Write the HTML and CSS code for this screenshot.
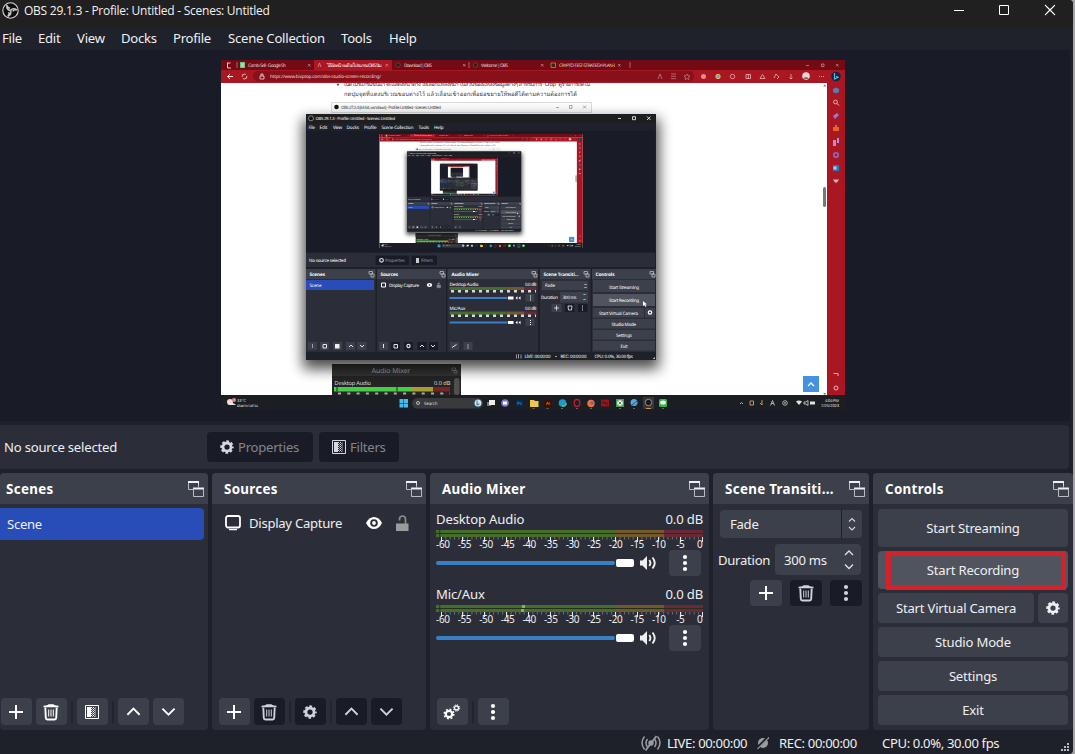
FILE: index.html
```html
<!DOCTYPE html>
<html lang="en">
<head>
<meta charset="utf-8">
<title>OBS 29.1.3</title>
<link rel="stylesheet" href="styles.css">
</head>
<body>
<svg class="defs" width="0" height="0">
  <symbol id="plus" viewBox="0 0 14 14"><path d="M7 0v14M0 7h14" stroke="currentColor" stroke-width="2" fill="none"/></symbol>
  <symbol id="trash" viewBox="0 0 16 18"><path d="M.5 2.700Q5 2.400 5.500 1.300h5Q11 2.400 15.500 2.700v1.500H.5z" fill="currentColor"/><path d="M2.300 4.500l.5 10.500q.1 1.500 1.500 1.500h7.400q1.400 0 1.500-1.500l.5-10.500" fill="none" stroke="currentColor" stroke-width="1.900"/><path d="M5.700 6.500v7M8 6.500v7M10.300 6.500v7" stroke="currentColor" stroke-width="1"/></symbol>
  <symbol id="filter" viewBox="0 0 14 14"><path d="M.5.5h13v13H.5z" fill="none" stroke="currentColor"/><path d="M2 2h4v10H2z" fill="currentColor"/><path d="M6.500 2v10M8.500 2v10" stroke="currentColor" stroke-dasharray="1 1"/><path d="M7.500 3v9M9.500 3v9" stroke="currentColor" stroke-dasharray="1 1" opacity=".7"/><path d="M10.500 2v10" stroke="currentColor" opacity=".35"/></symbol>
  <symbol id="up" viewBox="0 0 16 16"><path d="M1.500 11.500L8 5l6.500 6.500" fill="none" stroke="currentColor" stroke-width="2"/></symbol>
  <symbol id="down" viewBox="0 0 16 16"><path d="M1.500 5L8 11.500 14.500 5" fill="none" stroke="currentColor" stroke-width="2"/></symbol>
  <symbol id="gear" viewBox="0 0 16 16"><circle cx="8" cy="8" r="4.600" fill="none" stroke="currentColor" stroke-width="3.200"/><circle cx="8" cy="8" r="6.500" fill="none" stroke="currentColor" stroke-width="2.400" stroke-dasharray="3 2.105" stroke-dashoffset="1.500"/></symbol>
  <symbol id="dots" viewBox="0 0 16 18"><g fill="currentColor"><circle cx="8" cy="3" r="2.100"/><circle cx="8" cy="9" r="2.100"/><circle cx="8" cy="15" r="2.100"/></g></symbol>
  <symbol id="pop" viewBox="0 0 16 16"><path d="M10.500 4V.800M.500 1v7.500H5" fill="none" stroke="currentColor" opacity=".7"/><path d="M0 0h11v2H0zM5 6.500h11v2H5z" fill="currentColor"/><path d="M10.500 2v4.500M5.500 8.500v7h10v-7" fill="none" stroke="currentColor" opacity=".7"/></symbol>
  <symbol id="speaker" viewBox="0 0 17 14"><path d="M0 4.500h2.500L7 0v14L2.500 9.500H0z" fill="currentColor"/><path d="M9.300 4q2.200 3 0 6M12.500 1.500q4.500 5.500 0 11" fill="none" stroke="currentColor" stroke-width="1.900"/></symbol>
  <symbol id="obs" viewBox="0 0 17 17"><circle cx="8.500" cy="8.500" r="7.700" fill="#0d0d0f" stroke="#d8d8d8" stroke-width="1.100"/><g fill="none" stroke="#c8c8c8" stroke-width="1.500"><path d="M8.500 8.500Q4.500 8 4.800 3.200Q5.500 5.800 8 6.300"/><path d="M8.500 8.500Q4.500 8 4.800 3.200Q5.500 5.800 8 6.300" transform="rotate(120 8.500 8.500)"/><path d="M8.500 8.500Q4.500 8 4.800 3.200Q5.500 5.800 8 6.300" transform="rotate(240 8.500 8.500)"/></g></symbol>
  <symbol id="meter" viewBox="0 0 268 12">
    <path d="M0 0h180v7H0z" fill="#466d2c"/><path d="M180 0h48v7h-48z" fill="#71592d"/><path d="M228 0h39v7h-39z" fill="#692a38"/>
    <path d="M0 3.500h267M3.800 0v7" stroke="#24301f" stroke-width="1"/>
    <path d="M5 8.200h262" stroke="#74777f" stroke-width="2.400" stroke-dasharray=".9 3.457"/>
    <path d="M5.500 7v5M26.500 7v5M48.500 7v5M70.500 7v5M92.500 7v5M114.500 7v5M136.500 7v5M157.500 7v5M179.500 7v5M201.500 7v5M222.500 7v5M244.500 7v5M266.500 7v5" stroke="#e4e5e8"/>
  </symbol>
</svg>

<div class="window">
  <header class="titlebar">
    <svg class="logo"><use href="#obs"/></svg>
    <span class="title">OBS 29.1.3 - Profile: Untitled - Scenes: Untitled</span>
    <svg class="winbtns" viewBox="0 0 102 12"><path d="M0 6.500h10" stroke="#fff"/><path d="M45.500 1.500h9v9h-9z" fill="none" stroke="#fff"/><path d="M91 1l10 10M101 1L91 11" stroke="#fff" stroke-width="1.100"/></svg>
  </header>
  <nav class="menubar">
    <span class="m1">File</span><span class="m2">Edit</span><span class="m3">View</span><span class="m4">Docks</span><span class="m5">Profile</span><span class="m6">Scene Collection</span><span class="m7">Tools</span><span>Help</span>
  </nav>

  <main class="preview">
    <svg class="capture" viewBox="221 60 624 350">
      <defs>
        <filter id="shadow" x="-20%" y="-20%" width="140%" height="140%"><feGaussianBlur stdDeviation="7"/></filter>
        <g id="desk">
          <path d="M221 60h624v350H221z" fill="#fff"/>
          <path d="M221 60h624v10H221z" fill="#740a14"/>
          <path d="M314 60h78v11h-78z" fill="#ab1723"/>
          <path d="M221 70h624v13H221zM827 82h18v313h-18z" fill="#a81722"/>
          <rect x="253" y="71" width="441" height="10.500" rx="5" fill="#87101a"/>
          <g font-size="4.700" fill="#efd4d6">
            <text x="248" y="67" textLength="38">Comb-Sell - Google Sh</text>
            <text x="326" y="67" textLength="55" fill="#fff">วิธีอัดหน้าจอด้วยโปรแกรม OBS Stu</text>
            <text x="404" y="67" textLength="28">Download | OBS</text>
            <text x="481" y="67" textLength="27">Welcome | OBS</text>
            <text x="559" y="67" textLength="56">CRYPTO-TEST-STRATEGY-PLAN-I</text>
            <text x="270" y="78.300" textLength="111" fill="#f1d5d7">https://www.bixptop.com/obs-studio-screen-recording/</text>
          </g>
          <path d="M227 63h3.500M227.500 63v5h3.500" stroke="#efc7ca" fill="none"/><path d="M237 62v6M469 62v6M630 62v6" stroke="#c98a90" stroke-width=".7"/>
          <path d="M240 62h5v6h-5z" fill="#6fc07a"/><path d="M241 64h3M241 66h3" stroke="#fff" stroke-width=".8"/>
          <path d="M318 67l1.500-4 1.500 4" stroke="#d8a0a0" stroke-width=".7" fill="none"/><circle cx="398" cy="65" r="2.300" fill="#33181c" stroke="#7c4a4e" stroke-width=".7"/><circle cx="475.500" cy="65" r="2.300" fill="#33181c" stroke="#7c4a4e" stroke-width=".7"/><path d="M551 63h4.500v4.500H551z" fill="#3a2510" stroke="#c78c35" stroke-width=".8"/>
          <path d="M308 64l2.500 2.500m0-2.500L308 66.500M385.500 64l2.500 2.500m0-2.500l-2.500 2.500M463 64l2.500 2.500m0-2.500l-2.500 2.500M541 64l2.500 2.500m0-2.500l-2.500 2.500M618 64l2.500 2.500m0-2.500l-2.500 2.500M806 65.500h3M821.500 64h2.500v2.500h-2.500zM836 64l2.500 2.500m0-2.500l-2.500 2.500" stroke="#dfaeb2" stroke-width=".6" fill="none"/>
          <path d="M233 76.500h-5.500m2.500-2.300l-2.500 2.300 2.500 2.300" stroke="#fff" fill="none" stroke-width=".9"/>
          <circle cx="244.500" cy="76.500" r="2.400" fill="none" stroke="#f0c8ca" stroke-width=".9" stroke-dasharray="5 1.500"/><path d="M260 76h4v3h-4zM261 76v-2h2v2" stroke="#f4d5d8" fill="none" stroke-width=".8"/>
          <g fill="none" stroke="#cf858b" stroke-width=".7"><path d="M658 79l2-5 2 5M671 74h5m-5 2.300h5m-5 2.400h5"/><path d="M687 74l1 1.800 2 .2-1.500 1.500.4 2-1.900-1-1.900 1 .4-2-1.500-1.500 2-.2z"/><g stroke="#f4c3c6"><circle cx="732.500" cy="76.500" r="2.200"/><path d="M746 74.500h4.500v4H746zM748.300 74v5M760 78.500l2.500-4 2.500 4zM774 78l2-4 3 3-2 2M791 74v5m-1.500-1.500L791 79l1.500-1.500M819 76.500h1m1 0h1m1 0h1"/></g></g>
          <circle cx="703.500" cy="76.500" r="2.500" fill="#ee8790"/><circle cx="718" cy="76.500" r="2.200" fill="#6ba2e2" stroke="#e3bd55"/><circle cx="806" cy="76" r="3.800" fill="#edd5d0"/><path d="M803 79q3-4 6 0" fill="#876761"/>
          <circle cx="836" cy="76.500" r="4.800" fill="#162541"/><path d="M834.500 73v6l3.500-1.800-2-1" stroke="#61b8e7" fill="none" stroke-width="1.200"/>
          <path d="M836 87.500l3 1.500v3l-3 1.500-3-1.500v-3z" fill="#567cb8"/><circle cx="835.500" cy="102" r="1.900" fill="none" stroke="#e9cbd0" stroke-width=".8"/><path d="M837 103.500l2 2" stroke="#e9cbd0"/>
          <path d="M833 116l4-3 2 2-4 4z" fill="#9a79d4"/><path d="M833 127h6v4h-6zM835 127v-2h2v2" fill="#e46528"/><path d="M833 140h3v6h-3zM837 138h2v5h-2z" fill="#ba8bd3"/><circle cx="836" cy="155" r="2.200" fill="none" stroke="#8d62bc" stroke-width="1.800"/><path d="M833 165h6v6h-6z" fill="#2d73bd"/><path d="M833.500 166.500h3v3h-3z" fill="#a9d5f3"/><path d="M833 179.500h6l-2 3h-2z" fill="#d9b5c8"/>
          <rect x="823" y="187" width="3" height="20" rx="1.500" fill="#777"/><path d="M823.200 86.500l1.500-2 1.500 2zM823.200 393l1.500 2 1.500-2z" fill="#777"/>
          <path d="M833.500 373.500h4.500v2.500" stroke="#eab3b8" fill="none"/><circle cx="836" cy="388" r="2" fill="none" stroke="#eab3b8"/>
          <svg x="335" y="83" width="260" height="17" viewBox="335 83 260 17"><circle cx="338" cy="84.500" r="1" fill="#333"/><g font-size="5.700" fill="#33333d"><text x="344" y="86.300" textLength="246">เปิดโปรแกรมขึ้นมา จะแสดงหน้าต่าง ให้เลือกแหล่งที่มา ในส่วนของแหล่งข้อมูลต่างๆ สำหรับการ "Crop" ดูรายการถัดไป</text><text x="344" y="96" textLength="233">กดปุ่มจุดที่แดงบริเวณขอบต่างไว้ แล้วเลื่อนเข้าออกเพื่อย่อขยายให้พอดีได้ตามความต้องการได้</text></g></svg>
          <path d="M331.500 102.500h260v10h-260z" fill="#fafafa" stroke="#ccc" stroke-width=".7"/><circle cx="336.500" cy="107" r="2.300" fill="#151515"/><text x="341" y="109" font-size="4.400" fill="#444" textLength="100">OBS 27.2.4 (64-bit, windows) - Profile: Untitled - Scenes: Untitled</text><path d="M556 107.500h3M569.500 105.500h2.500v3h-2.500zM583 105.500l3 3m0-3l-3 3" stroke="#777" stroke-width=".6" fill="none"/>
          <path d="M332 364h129v31H332z" fill="#242424"/><path d="M332 364h129v12H332z" fill="#343434"/><text x="371.500" y="373" font-size="7" fill="#a9a9a9" textLength="39">Audio Mixer</text><path d="M452 368h3.500v2.500H452zM454 370.500h3v2.500h-3z" stroke="#999" stroke-width=".6" fill="none"/>
          <text x="334.500" y="384.500" font-size="5.600" fill="#ddd" textLength="36.500">Desktop Audio</text><text x="434" y="384.500" font-size="5.700" fill="#ddd" textLength="16.500">0.0 dB</text><path d="M334 387h78v4.500h-78z" fill="#46ce48"/><path d="M412 387h21v4.500h-21z" fill="#a89d32"/><path d="M433 387h17v4.500h-17z" fill="#782326"/><path d="M337 386.500v5M397 386.500v5" stroke="#182c18"/><path d="M338 393.500h112" stroke="#aaa" stroke-width="2" stroke-dasharray="3 6.300"/><rect x="454" y="378" width="5.500" height="17" rx="2.500" fill="#505050"/>
          <path d="M803 376h16v16h-16z" fill="#4592df"/><path d="M808 386l3-3 3 3" stroke="#fff" stroke-width="1.400" fill="none"/>
          <path d="M221 395h624v15H221z" fill="#1b1e22"/>
          <circle cx="230" cy="402" r="3" fill="#f0ddd6"/><circle cx="234" cy="400" r="2" fill="#e6877d"/><path d="M228 405q4-4 8 0z" fill="#e5e7ed"/><g font-size="4" fill="#ddd"><text x="237" y="402" textLength="9">33°C</text><text x="237" y="407" textLength="21">ฝนตกบางส่วน</text></g>
          <path d="M399.500 399h4v4h-4zM404 399h4v4h-4zM399.500 403.500h4v4h-4zM404 403.500h4v4h-4z" fill="#49b9ec"/>
          <rect x="412" y="398" width="71" height="10.500" rx="5.200" fill="#383a3e"/><circle cx="418" cy="403" r="1.500" fill="none" stroke="#ddd" stroke-width=".8"/><text x="424" y="405" font-size="4.400" fill="#ddd" textLength="13.500">Search</text>
          <circle cx="478" cy="403" r="3.500" fill="#cde7ed"/><path d="M477 400.500v4.500l2.500-1.200" stroke="#1676a9" fill="none"/>
          <path d="M487 402h4v4h-4z" fill="#777"/><path d="M489 400h6v5h-6z" fill="#eee"/><circle cx="505" cy="403" r="3.800" fill="#777acc"/><path d="M503 401.500h4v3h-4z" fill="#fff"/><path d="M516 399.500h7v7h-7z" fill="#082a48"/><text x="517" y="405" font-size="4.500" fill="#38a2e8">Ps</text><path d="M530 400h4l1 1h3.500v6H530z" fill="#edc64f"/><path d="M544 399.500h8v7.500h-8z" fill="#351204"/><text x="546" y="405" font-size="4.500" fill="#f29b31">Ai</text>
          <circle cx="562.500" cy="403" r="3.800" fill="#1d9bc8"/><path d="M562 406q5 1 4-3" stroke="#73dc87" fill="none"/><ellipse cx="577" cy="403" rx="2.800" ry="3.500" fill="none" stroke="#b51d31" stroke-width="1.400"/><circle cx="591" cy="403.500" r="3.700" fill="#eb723b"/><circle cx="592" cy="403" r="1.700" fill="#8c54a4"/><path d="M601 399.500h8v7h-8z" fill="#9d111e"/><path d="M602 402l6 2" stroke="#421" stroke-width="1.500"/><path d="M616 399h8v8h-8z" fill="#4b9d55"/><circle cx="620" cy="403" r="2.800" fill="#fff"/><path d="M618.500 401.500l3 3m0-3l-3 3" stroke="#267932" stroke-width=".8"/><circle cx="634" cy="402.500" r="3.500" fill="#55a8d4"/><path d="M632 405l5-4" stroke="#175b8e"/><path d="M643 397h11v12h-11z" fill="#393735"/><circle cx="648.500" cy="402.500" r="3.200" fill="#171717" stroke="#aaa" stroke-width=".8"/><path d="M646 408.500h5" stroke="#d8924d"/><rect x="659" y="399" width="8" height="8" rx="1.500" fill="#35b74b"/><ellipse cx="663" cy="402.500" rx="2.800" ry="2" fill="#fff"/>
          <path d="M546.500 408.500h2M561 408.500h2M576 408.500h2M590 408.500h2M619 408.500h2M633 408.500h2M662 408.500h2M532.500 408.500h2" stroke="#888" stroke-width=".7"/>
          <path d="M740 404l1.500-1.500L743 404M770.500 405.500l2-5 2 5m-3-2h2M804 402h2l2-1.500v5l-2-1.500h-2z" stroke="#d8d8d8" stroke-width=".8" fill="none"/><path d="M796 401.500q3-2 6 0l-3 3.500zM810 401.500h5v3h-5z" fill="#e2e2e2"/><path d="M750 401h3.500v4H750zM762 400v5l-2-2" stroke="#d9a461" stroke-width=".9" fill="none"/><circle cx="785" cy="403" r="2.300" fill="none" stroke="#ccc" stroke-width=".8"/><path d="M784 403h2" stroke="#ccc"/>
          <g font-size="4" fill="#e2e2e2"><text x="825" y="402" textLength="14">4:04 PM</text><text x="821" y="407" textLength="18">7/25/2023</text></g>
        </g>
        <g id="obswin">
          <rect x="303" y="119" width="356" height="250" fill="#000" opacity=".7" filter="url(#shadow)"/>
          <path d="M306 114h350v246H306z" fill="#1e2129"/><path d="M306 114h350v9H306z" fill="#1d1e20"/><path d="M306 131h349v121H306z" fill="#191c26"/>
          <circle cx="311" cy="118.300" r="2.500" fill="#111" stroke="#ccc" stroke-width=".6"/>
          <path d="M618 118.500h3M632.500 116.700h3v3h-3zM647 116.500l3.500 3.500m0-3.500L647 120" stroke="#fff" stroke-width=".8" fill="none"/>
          <g fill="#fff" font-size="4.600"><text x="315.500" y="120" font-size="4.200" textLength="79.500">OBS 29.1.3 - Profile: Untitled - Scenes: Untitled</text>
          <text x="308.500" y="129" textLength="6.500">File</text><text x="319.500" y="129" textLength="8">Edit</text><text x="333" y="129" textLength="9">View</text><text x="346.500" y="129" textLength="12.500">Docks</text><text x="364" y="129" textLength="12.500">Profile</text><text x="381.500" y="129" textLength="32">Scene Collection</text><text x="418.500" y="129" textLength="10.500">Tools</text><text x="434" y="129" textLength="9.500">Help</text></g>
          <path d="M306 253h349v14H306zM306 269h69.500v83H306zM377 269h69v83h-69zM447.500 269H538v83h-90.500zM540 269h50.500v83H540zM592 269h63.500v83H592z" fill="#2b2e38"/>
          <path d="M306 269h69.500v10H306zM377 269h69v10h-69zM447.500 269H538v10h-90.500zM540 269h50.500v10H540zM592 269h63.500v10H592z" fill="#3c404b"/>
          <path d="M375.500 255.500H409v9.500h-33.500zM411.500 255.500h25.500v9.500h-25.500z" fill="#191c26"/><circle cx="381.500" cy="260.300" r="1.800" fill="none" stroke="#ddd" stroke-width="1.200"/><path d="M416 258h3v5h-3z" fill="#ccc"/>
          <g font-size="4.500" fill="#8a8d96"><text x="385" y="262" textLength="20">Properties</text><text x="421" y="262" textLength="12">Filters</text></g>
          <text x="309" y="262" font-size="4.500" fill="#fff" textLength="37">No source selected</text>
          <g font-size="4.700" font-weight="700" fill="#fff"><text x="309.500" y="275.700" textLength="15.500">Scenes</text><text x="380.500" y="275.700" textLength="17.500">Sources</text><text x="451.500" y="275.700" textLength="27.500">Audio Mixer</text><text x="543.500" y="275.700" textLength="35">Scene Transiti...</text><text x="595.500" y="275.700" textLength="19">Controls</text></g>
          <path d="M369 271.500h3.500v2.500H369zM371 274h3v3h-3zM440 271.500h3.500v2.500H440zM442 274h3v3h-3zM532 271.500h3.500v2.500H532zM534 274h3v3h-3zM584 271.500h3.500v2.500H584zM586 274h3v3h-3zM650 271.500h3.500v2.500H650zM652 274h3v3h-3z" fill="none" stroke="#ccc" stroke-width=".7"/>
          <path d="M306 280h68v10h-68z" fill="#284cb8"/><path d="M381.500 283h4v4h-4z" fill="none" stroke="#fff"/><ellipse cx="429.500" cy="285" rx="2.700" ry="1.900" fill="#fff"/><circle cx="429.500" cy="285" r=".8" fill="#222"/><path d="M437 285h3.500v2.700H437zM438 285v-2h2" fill="#888" stroke="#888" stroke-width=".6"/>
          <g id="strip"><path d="M449.500 287h57v3h-57z" fill="#466d2c"/><path d="M506.500 287h18v3h-18z" fill="#71592d"/><path d="M524 287h12.500v3H524z" fill="#692a38"/><path d="M451 291.300h85" stroke="#d8dad5" stroke-width="2.500" stroke-dasharray="3 4"/><path d="M449.500 298h58" stroke="#397fc6" stroke-width="1.800"/><path d="M508 296.500h5.500v3H508zM515.500 298l2-1.800v3.500zM518.500 298l2-1.800v3.500z" fill="#fff"/><path d="M525.500 294h9v7.500h-9z" fill="#3c404b"/><path d="M530.500 295.500v5" stroke="#fff" stroke-dasharray="1 1"/></g><use href="#strip" y="24.500"/>
          <path d="M542 281h46v9h-46zM560 292h28v10.500h-28zM551.500 304h10v8h-10zM593 280h62v12h-62zM593 308h51v9.500h-51zM645 308h10v9.500h-10zM593 319h62v9.500h-62zM593 330h62v9.500h-62zM593 341h62v9.500h-62z" fill="#3c404b"/><path d="M593 294h62v12h-62z" fill="#50545e"/><path d="M565 304h9.500v8H565zM578 304h9.500v8H578z" fill="#191c26"/>
          <path d="M554 308h5M556.500 305.500v5M568 306h4l-.5 4h-3zM584.500 285l1-1 1 1M584.500 287l1 1 1-1M583.500 295l1-1 1 1M583.500 299l1 1 1-1" fill="none" stroke="#ddd" stroke-width=".9"/><path d="M582.500 305.500v5" stroke="#ddd" stroke-dasharray="1 1"/>
          <circle cx="650" cy="312.500" r="1.700" fill="none" stroke="#fff" stroke-width="1.200"/>
          <g font-size="4.500" fill="#fff"><text x="309.500" y="287" textLength="12">Scene</text><text x="389" y="287" textLength="30">Display Capture</text><text x="449.500" y="285.500" textLength="29">Desktop Audio</text><text x="525" y="285.500" textLength="11.500">0.0 dB</text><text x="449.500" y="310" textLength="16">Mic/Aux</text><text x="525" y="310" textLength="11.500">0.0 dB</text><text x="545" y="287" textLength="10">Fade</text><text x="541" y="299" textLength="17">Duration</text><text x="562.500" y="299" textLength="14">300 ms</text><text x="609" y="288.500" textLength="30">Start Streaming</text><text x="609" y="302" textLength="30">Start Recording</text><text x="599" y="314.500" textLength="39">Start Virtual Camera</text><text x="611.500" y="325.500" textLength="24.500">Studio Mode</text><text x="616" y="336.500" textLength="16">Settings</text><text x="620.500" y="347.500" textLength="7">Exit</text><text x="524.500" y="358" textLength="26">LIVE: 00:00:00</text><text x="560.500" y="358" textLength="26">REC: 00:00:00</text><text x="594.500" y="358" textLength="38.500">CPU: 0.0%, 30.00 fps</text></g>
          <path d="M308 342h9v8h-9zM320 342h9v8h-9zM333 342h9v8h-9zM346 342h9v8h-9zM357.500 342h9v8h-9zM379 342h9v8h-9zM450 342h9v8h-9zM463.500 342h9v8h-9z" fill="#3c404b"/><path d="M391 342h9v8h-9zM404 342h9v8h-9zM417.500 342h9v8h-9zM429 342h9v8h-9z" fill="#191c26"/>
          <path d="M383.500 344v4M323 344.500h3.500v3.500H323zM394 344.500h3.500v3.500H394zM349 347l2-2 2 2M360 345l2 2 2-2M420 347l2-2 2 2M431 345l2 2 2-2M452 347.500l4.500-3" fill="none" stroke="#e5e5e8"/><path d="M312.500 344v4M468 344v5M516.500 354.500v4M518.500 354v4.500M521 354.500v4M555 356.500h2" stroke="#999ca3"/><path d="M335 344h4.500v4.500H335z" fill="#eee"/><circle cx="408.500" cy="346" r="1.600" fill="none" stroke="#ddd" stroke-width="1.200"/><path d="M655 357v2h-2.500z" fill="#bbb"/>
          <path d="M643 301v5l1.300-1 1.200 2 .8-.4-1-2 1.500-.3z" fill="#fff"/>
        </g>
      </defs>
      <use href="#desk"/><use href="#obswin"/>
      <g transform="translate(379.500 134) scale(.3257) translate(-221 -60)"><use href="#desk"/><use href="#obswin"/>
        <g transform="translate(379.500 134) scale(.3257) translate(-221 -60)"><use href="#desk"/><use href="#obswin"/>
          <g transform="translate(379.500 134) scale(.3257) translate(-221 -60)"><use href="#desk"/><use href="#obswin"/></g>
        </g>
      </g>
    </svg>
  </main>

  <section class="context">
    <span class="nosource">No source selected</span>
    <div class="ctxbtn props"><svg class="i14"><use href="#gear"/></svg><span>Properties</span></div>
    <div class="ctxbtn filt"><svg class="i14"><use href="#filter"/></svg><span>Filters</span></div>
  </section>

  <section class="docks">
    <article class="dock scenes">
      <h2><span>Scenes</span><svg class="pop"><use href="#pop"/></svg></h2>
      <div class="body"><div class="selected">Scene</div></div>
      <div class="tools">
        <i class="btn"><svg class="i14"><use href="#plus"/></svg></i><i class="btn"><svg class="i18"><use href="#trash"/></svg></i><b></b>
        <i class="btn"><svg class="i14"><use href="#filter"/></svg></i><b></b>
        <i class="btn"><svg class="i16"><use href="#up"/></svg></i><i class="btn"><svg class="i16"><use href="#down"/></svg></i>
      </div>
    </article>
    <article class="dock sources">
      <h2><span>Sources</span><svg class="pop"><use href="#pop"/></svg></h2>
      <div class="body"><div class="source">
        <svg class="mon" viewBox="0 0 16 16"><rect x="1" y="1" width="14" height="11.500" rx="2" fill="none" stroke="#fff" stroke-width="1.800"/><path d="M4 14h8v1.200H4z" fill="#fff"/></svg>
        <span>Display Capture</span>
        <svg class="eye" viewBox="0 0 16 12"><path d="M0 6Q3 0 8 0t8 6q-3 6-8 6T0 6z" fill="#fff"/><circle cx="8" cy="6" r="3.800" fill="#2b2e38"/><circle cx="8" cy="6" r="1.900" fill="#fff"/></svg>
        <svg class="lock" viewBox="0 0 13 17"><path d="M0 8.500h12.500V16H0z" fill="#9b9b9b"/><path d="M9.500 9V4a3 3 0 0 0-6 0V5.500" fill="none" stroke="#8b8d92" stroke-width="1.700"/></svg>
      </div></div>
      <div class="tools">
        <i class="btn"><svg class="i14"><use href="#plus"/></svg></i><i class="btn off"><svg class="i18"><use href="#trash"/></svg></i><b></b>
        <i class="btn off"><svg class="i14"><use href="#gear"/></svg></i><b></b>
        <i class="btn off"><svg class="i16"><use href="#up"/></svg></i><i class="btn off"><svg class="i16"><use href="#down"/></svg></i>
      </div>
    </article>
    <article class="dock mixer">
      <h2><span>Audio Mixer</span><svg class="pop"><use href="#pop"/></svg></h2>
      <div class="body">
        <div class="channel">
          <div class="names"><span>Desktop Audio</span><span>0.0 dB</span></div>
          <svg class="meter"><use href="#meter" width="268" height="12"/></svg>
          <div class="scale"><span>-60</span><span>-55</span><span>-50</span><span>-45</span><span>-40</span><span>-35</span><span>-30</span><span>-25</span><span>-20</span><span>-15</span><span>-10</span><span>-5</span><span>0</span></div>
          <div class="vol"><div class="track"></div><div class="thumb"></div><svg class="spk"><use href="#speaker"/></svg><i class="btn kebab"><svg class="i18"><use href="#dots"/></svg></i></div>
        </div>
        <div class="channel">
          <div class="names"><span>Mic/Aux</span><span>0.0 dB</span></div>
          <svg class="meter"><use href="#meter" width="268" height="12"/><path d="M86 0h3v3h-3zM85 4h3v3h-3z" fill="#7cba58"/></svg>
          <div class="scale"><span>-60</span><span>-55</span><span>-50</span><span>-45</span><span>-40</span><span>-35</span><span>-30</span><span>-25</span><span>-20</span><span>-15</span><span>-10</span><span>-5</span><span>0</span></div>
          <div class="vol"><div class="track"></div><div class="thumb"></div><svg class="spk"><use href="#speaker"/></svg><i class="btn kebab"><svg class="i18"><use href="#dots"/></svg></i></div>
        </div>
      </div>
      <div class="tools">
        <i class="btn"><svg class="gears" viewBox="0 0 18 16"><g fill="none" stroke="#fff"><circle cx="6" cy="10" r="3.200" stroke-width="2.200"/><circle cx="6" cy="10" r="4.800" stroke-width="1.500" stroke-dasharray="1.900 1.870"/><circle cx="13.500" cy="4" r="2" stroke-width="1.300"/><circle cx="13.500" cy="4" r="3.200" stroke-width="1" stroke-dasharray="1.300 1.213"/></g></svg></i><b></b>
        <i class="btn"><svg class="i18"><use href="#dots"/></svg></i>
      </div>
    </article>
    <article class="dock trans">
      <h2><span>Scene Transiti...</span><svg class="pop"><use href="#pop"/></svg></h2>
      <div class="body">
        <div class="select"><span>Fade</span><svg class="carets" viewBox="0 0 21 28"><path d="M.500 0v28" stroke="#1d2029"/><path d="M8 11.500l3-3 3 3M8 17l3 3 3-3" fill="none" stroke="#d5d6da" stroke-width="1.100"/></svg></div>
        <div class="duration"><span>Duration</span><div class="spin"><span>300 ms</span><svg viewBox="0 0 10 22"><path d="M1 6l4-4 4 4M1 15.500l4 4 4-4" fill="none" stroke="#e0e1e5" stroke-width="1.300"/></svg></div></div>
        <div class="tbtns"><i class="btn"><svg class="i14"><use href="#plus"/></svg></i><i class="btn off"><svg class="i18"><use href="#trash"/></svg></i><i class="btn off"><svg class="i18"><use href="#dots"/></svg></i></div>
      </div>
    </article>
    <article class="dock controls">
      <h2><span>Controls</span><svg class="pop"><use href="#pop"/></svg></h2>
      <div class="stack">
        <div class="cbtn tall">Start Streaming</div>
        <div class="cbtn tall hover">Start Recording<div class="mark"></div></div>
        <div class="pair"><div class="cbtn vc">Start Virtual Camera</div><div class="cbtn cfg"><svg class="i14"><use href="#gear"/></svg></div></div>
        <div class="cbtn">Studio Mode</div>
        <div class="cbtn">Settings</div>
        <div class="cbtn">Exit</div>
      </div>
    </article>
  </section>

  <footer class="status">
    <svg class="live" viewBox="0 0 20 16"><g fill="none" stroke="#999b9f" stroke-width="1.500"><path d="M3.500 1.500q-5 6 0 13M6.500 4q-3 4 0 8M16.500 1.500q5 6 0 13M13.500 4q3 4 0 8"/><path d="M4.500 15.500l11-14.500" stroke-width="1.800"/></g><circle cx="10" cy="8" r="2.700" fill="#999b9f"/></svg>
    <span class="s1">LIVE: 00:00:00</span>
    <svg class="rec" viewBox="0 0 12 12"><circle cx="6" cy="6" r="5" fill="#9b9da0"/><path d="M-.5 11.500L11.500-.500" stroke="#1e2129" stroke-width="2.500"/><path d="M0 12.500L12.500 0" stroke="#9b9da0" stroke-width="1.100"/></svg>
    <span class="s2">REC: 00:00:00</span>
    <span class="s3">CPU: 0.0%, 30.00 fps</span>
    <svg class="grip" viewBox="0 0 9 9"><path d="M6 0h2v2H6zM3 3h2v2H3zM6 3h2v2H6zM0 6h2v2H0zM3 6h2v2H3zM6 6h2v2H6z" fill="#b9bbc0"/></svg>
  </footer>
</div>
</body>
</html>
```
FILE: styles.css
```css
* { box-sizing: border-box; }
body { margin: 0; width: 1075px; height: 754px; overflow: hidden; background: #a5a5a7; font-family: "Noto Sans", "Open Sans", sans-serif; font-size: 13.1px; letter-spacing: -.27px; color: #eeeff2; line-height: 18px; white-space: nowrap; }
svg { display: block; flex: none; }
.defs { position: absolute; }
.window { width: 1073px; height: 754px; background: #1e2129; display: flex; flex-direction: column; border-radius: 0 4px 4px 0; overflow: hidden; }
.titlebar { height: 27px; background: #202020; display: flex; padding: 2px 17px 0 2px; flex: none; }
.logo { width: 17px; height: 17px; }
.title { font-family: "Open Sans", sans-serif; font-size: 12px; letter-spacing: -.25px; margin-left: 5px; flex: 1; color: #f2f2f2; }
.winbtns { width: 102px; height: 12px; margin-top: 2px; }
.menubar { height: 23px; background: #1f222b; display: flex; padding: 2px 0 0 2px; flex: none; letter-spacing: -.23px; }
.m1 { width: 36px; } .m2 { width: 39px; } .m3 { width: 44px; } .m4 { width: 52px; } .m5 { width: 55px; } .m6 { width: 113px; } .m7 { width: 48px; }
.preview { height: 371px; width: 1070px; background: #191c26; padding: 10px 0 0 221px; flex: none; }
.capture { width: 624px; height: 350px; letter-spacing: 0; text-rendering: geometricPrecision; }
.context { margin-top: 4px; height: 44px; width: 1069px; background: #2b2e38; border-radius: 0 4px 4px 0; display: flex; align-items: center; padding-left: 4px; flex: none; }
.nosource { width: 203px; letter-spacing: -.2px; }
.ctxbtn { height: 30px; background: #191c26; border-radius: 4px; display: flex; align-items: center; gap: 4px; padding-left: 13px; color: #83858d; }
.ctxbtn svg { color: #d6d8e0; }
.ctxbtn span { letter-spacing: -.25px; }
.props { width: 106px; margin-right: 6px; }
.filt { width: 80px; }
.i14 { width: 14px; height: 14px; }
.i16 { width: 15px; height: 15px; }
.i18 { width: 16px; height: 18px; }
.docks { margin-top: 4px; height: 257px; display: flex; gap: 4px; flex: none; }
.dock { background: #2b2e38; border-radius: 4px; overflow: hidden; display: flex; flex-direction: column; }
.scenes { width: 208px; } .sources { width: 214px; } .mixer { width: 279px; } .trans { width: 156px; } .controls { width: 200px; }
.dock h2 { margin: 0; height: 31px; background: #3c404b; display: flex; align-items: center; justify-content: space-between; font-size: 13.33px; letter-spacing: .33px; padding: 0 4px 0 12px; color: #fff; flex: none; }
.scenes h2 { padding-left: 6px; }
.pop { width: 16px; height: 16px; color: #eff0f2; }
.body { flex: 1; }
.selected { margin-top: 4px; width: 204px; height: 32px; background: #284cb8; border-radius: 0 4px 4px 0; padding: 7px; }
.source { display: flex; align-items: center; height: 30px; margin-top: 4px; padding-left: 13px; }
.mon { width: 16px; height: 16px; }
.source span { width: 117px; margin-left: 8px; }
.eye { width: 16px; height: 12px; }
.lock { width: 13px; height: 17px; margin-left: 14px; }
.tools { height: 32px; display: flex; gap: 4px; padding-left: 7px; }
.scenes .tools { padding-left: 1px; }
.tools b { width: 2px; height: 22px; margin-top: 3px; background: #22252e; }
.tools .btn { padding-right: 1px; }
.btn { width: 31px; height: 27px; border-radius: 4px; background: #3c404b; display: flex; align-items: center; justify-content: center; color: #fff; }
.off { background: #191c26; color: #cfd2dd; }
.gears { width: 18px; height: 16px; }
.mixer .body { padding: 6px 6px 0; }
.channel { height: 75px; }
.names { display: flex; justify-content: space-between; height: 20px; letter-spacing: -.15px; }
.meter { width: 268px; height: 12px; }
.scale { height: 11px; margin: -3px 0 0 -4px; display: flex; font-size: 10px; line-height: 10px; letter-spacing: -.4px; }
.scale span { width: 21.6px; text-align: center; flex: none; }
.scale span:last-child { width: 17px; }
.vol { display: flex; align-items: center; height: 26px; }
.track { width: 179px; height: 4px; border-radius: 2px; background: #397fc6; }
.thumb { width: 18px; height: 8px; border-radius: 2px; background: #fff; margin-left: 1px; }
.spk { width: 17px; height: 14px; margin-left: 6px; }
.kebab { width: 32px; height: 26px; margin-left: 12px; }
.trans .body { padding-top: 6px; }
.select { margin-left: 7px; width: 142px; height: 28px; background: #3c404b; border-radius: 4px; display: flex; justify-content: space-between; align-items: center; padding-left: 10px; }
.carets { width: 21px; height: 28px; }
.duration { display: flex; align-items: center; margin: 6px 0 5px 5px; }
.duration > span { width: 57px; }
.spin { width: 86px; height: 31px; border-radius: 4px; background: #3c404b; display: flex; align-items: center; justify-content: space-between; padding: 0 7px 0 9px; }
.spin svg { width: 10px; height: 22px; }
.tbtns { display: flex; gap: 8px; padding-left: 37px; }
.tbtns .btn { width: 32px; height: 26px; }
.stack { display: flex; flex-direction: column; gap: 4px; padding: 5px 5px 0; }
.cbtn { height: 30px; background: #3c404b; border-radius: 4px; display: flex; align-items: center; justify-content: center; letter-spacing: -.2px; }
.tall { height: 38px; }
.hover { background: #50545e; position: relative; }
.mark { position: absolute; left: 8px; top: 0; width: 180px; height: 39px; border: 5px solid #d3222c; }
.pair { display: flex; gap: 4px; }
.vc { width: 156px; } .cfg { width: 30px; }
.status { height: 24px; display: flex; align-items: center; padding: 2px 3px 0 641px; letter-spacing: -.37px; }
.live { width: 20px; height: 16px; }
.s1 { margin-left: 6px; width: 90px; }
.rec { width: 12px; height: 12px; }
.s2 { margin-left: 10px; width: 103px; }
.s3 { flex: 1; }
.grip { width: 9px; height: 9px; margin-top: 8px; }
```
